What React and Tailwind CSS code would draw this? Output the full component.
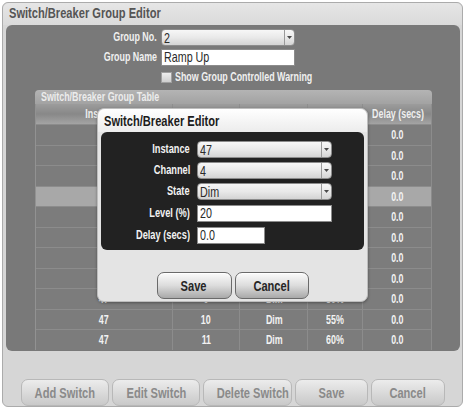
// Switch/Breaker Group Editor — group table with the switch editor dialog open
const FONT = "font-['Liberation_Sans','Arial',sans-serif]";

const ORIGIN = {
  left: "origin-left",
  right: "origin-right",
  center: "origin-center",
};

// the UI uses a condensed Helvetica; squeeze Liberation Sans to match
function N({ children, o = "left" }) {
  return <span className={`inline-block whitespace-nowrap scale-x-[0.74] ${ORIGIN[o]}`}>{children}</span>;
}

const ROWS = Array.from({ length: 11 }, (_, i) => ({
  instance: 47,
  channel: i + 1,
  state: "Dim",
  level: `${(i + 2) * 5}%`,
  delay: "0.0",
}));

const COLS = [
  { key: "instance", label: "Instance", w: "w-[137px]" },
  { key: "channel", label: "Channel", w: "w-[68px]" },
  { key: "state", label: "State", w: "w-[68px]" },
  { key: "level", label: "Level", w: "w-[55px]" },
  { key: "delay", label: "Delay (secs)", w: "w-[69px]" },
];

function Arrow() {
  return (
    <svg width="5" height="3" viewBox="0 0 5 3">
      <path d="M0 0h5L2.5 3z" fill="#4a4a4a" />
    </svg>
  );
}

function Select({ value, className = "" }) {
  return (
    <div className={`flex h-[17px] items-stretch rounded-[4px] border border-[#8c8c8c] bg-gradient-to-b from-[#f7f7f7] via-[#e9e9e9] to-[#d4d4d4] ${className}`}>
      <span className="flex-1 pl-[2px] text-[14.5px] leading-[16px] text-[#2a2a2a]">
        <N>{value}</N>
      </span>
      <span className="flex w-[10px] items-center justify-center border-l border-[#9a9a9a]">
        <Arrow />
      </span>
    </div>
  );
}

function TextBox({ value, className = "" }) {
  return (
    <div className={`h-[17px] border border-[#8c8c8c] bg-white pl-[2px] text-[14.5px] leading-[15px] text-[#2a2a2a] ${className}`}>
      <N>{value}</N>
    </div>
  );
}

function Button({ children, className = "", muted }) {
  return (
    <button
      className={`rounded-[7px] border text-[15px] font-bold leading-[25px] ${
        muted
          ? "border-[#b8b8b8] bg-gradient-to-b from-[#ececec] to-[#c9c9c9] text-[#8a8a8a]"
          : "border-[#6a6a6a] bg-gradient-to-b from-[#fbfbfb] via-[#dcdcdc] to-[#a9a9a9] text-[#262626] shadow-[inset_0_1px_0_#fff]"
      } ${className}`}
    >
      <N o="center">{children}</N>
    </button>
  );
}

export default function App() {
  return (
    <div className={`h-[409px] w-[466px] bg-white pl-[2px] pt-[2px] ${FONT}`}>
      <div className="flex h-[405px] w-[461px] flex-col rounded-[6px] border border-[#ababab] bg-[#d6d6d6]">
        {/* Title */}
        <div className="h-[22px] rounded-t-[6px] bg-gradient-to-b from-[#e6e6e6] to-[#dadada] pl-[6px] text-[15px] font-bold leading-[20px] text-[#555]">
          <N>Switch/Breaker Group Editor</N>
        </div>

        {/* Main panel */}
        <div className="relative mx-[3px] flex h-[326px] w-[454px] flex-col overflow-hidden rounded-[6px] bg-[#797979]">
          <div className="grid grid-cols-[151px_134px] items-center gap-x-[4px] gap-y-[3px] pt-[4px]">
            <span className="text-right text-[12px] font-bold leading-[17px] text-[#f0f0f0]">
              <N o="right">Group No.</N>
            </span>
            <Select value="2" />
            <span className="text-right text-[12px] font-bold leading-[17px] text-[#f0f0f0]">
              <N o="right">Group Name</N>
            </span>
            <TextBox value="Ramp Up" />
            <span />
            <div className="flex h-[17px] items-center gap-[3px] whitespace-nowrap text-[12px] font-bold leading-[17px] text-[#f0f0f0]">
              <span className="h-[11px] w-[11px] shrink-0 border border-[#a0a0a0] bg-gradient-to-b from-[#eeeeee] to-[#cfcfcf]" />
              <N>Show Group Controlled Warning</N>
            </div>
          </div>

          {/* Group table */}
          <div className="ml-[29px] mt-[4px] flex w-[397px] flex-col">
            <div className="h-[14px] rounded-t-[4px] bg-gradient-to-b from-[#b4b4b4] to-[#a2a2a2] pl-[6px] text-[12px] font-bold leading-[14px] text-[#ececec]">
              <N>Switch/Breaker Group Table</N>
            </div>
            <div className="flex flex-col border-l border-[#929292] bg-[#7c7c7c]">
              <div className="flex h-[20px] bg-gradient-to-b from-[#9c9c9c] via-[#888] to-[#a4a4a4]">
                {COLS.map((c) => (
                  <div key={c.key} className={`${c.w} border-r border-[#8e8e8e] text-center text-[12px] font-bold leading-[20px] text-[#eeeeee]`}>
                    <N o="center">{c.label}</N>
                  </div>
                ))}
              </div>
              {ROWS.map((r, i) => (
                <div key={r.channel} className={`flex h-[20.5px] border-t border-[#8c8c8c] ${i === 3 ? "bg-[#a8a8a8]" : ""}`}>
                  {COLS.map((c) => (
                    <div key={c.key} className={`${c.w} border-r border-[#8c8c8c] text-center text-[12px] font-bold leading-[20px] text-[#f2f2f2]`}>
                      <N o="center">{r[c.key]}</N>
                    </div>
                  ))}
                </div>
              ))}
            </div>
          </div>

          {/* Switch editor dialog */}
          <div className="absolute left-[91px] top-[83px] flex h-[194px] w-[271px] flex-col rounded-[7px] border border-[#bdbdbd] bg-[#e4e4e4] shadow-[0_1px_3px_rgba(0,0,0,0.35)]">
            <div className="h-[23px] rounded-t-[7px] bg-gradient-to-b from-white to-[#ececec] pl-[6px] text-[15px] font-bold leading-[24px] text-[#1c1c1c]">
              <N>Switch/Breaker Editor</N>
            </div>
            <div className="mx-[3px] h-[118px] rounded-[6px] bg-[#222] pt-[9px]">
              <div className="grid grid-cols-[89px_135px] items-center gap-x-[7px] gap-y-[4px]">
                <span className="text-right text-[12.5px] font-bold leading-[17px] text-[#f2f2f2]">
                  <N o="right">Instance</N>
                </span>
                <Select value="47" />
                <span className="text-right text-[12.5px] font-bold leading-[17px] text-[#f2f2f2]">
                  <N o="right">Channel</N>
                </span>
                <Select value="4" />
                <span className="text-right text-[12.5px] font-bold leading-[17px] text-[#f2f2f2]">
                  <N o="right">State</N>
                </span>
                <Select value="Dim" />
                <span className="mt-[1px] text-right text-[12.5px] font-bold leading-[17px] text-[#f2f2f2]">
                  <N o="right">Level (%)</N>
                </span>
                <TextBox value="20" className="mt-[1px]" />
                <span className="mt-[1px] text-right text-[12.5px] font-bold leading-[17px] text-[#f2f2f2]">
                  <N o="right">Delay (secs)</N>
                </span>
                <TextBox value="0.0" className="mt-[1px] w-[68px]" />
              </div>
            </div>
            <div className="mt-[22px] flex justify-center gap-[3px]">
              <Button className="h-[27px] w-[75px]">Save</Button>
              <Button className="h-[27px] w-[74px]">Cancel</Button>
            </div>
          </div>
        </div>

        {/* Bottom actions */}
        <div className="mt-[28px] flex gap-[3px] pl-[18px]">
          <Button muted className="h-[27px] w-[88px]">Add Switch</Button>
          <Button muted className="h-[27px] w-[88px]">Edit Switch</Button>
          <Button muted className="h-[27px] w-[89px]">Delete Switch</Button>
          <Button muted className="h-[27px] w-[73px]">Save</Button>
          <Button muted className="h-[27px] w-[74px]">Cancel</Button>
        </div>
      </div>
    </div>
  );
}
